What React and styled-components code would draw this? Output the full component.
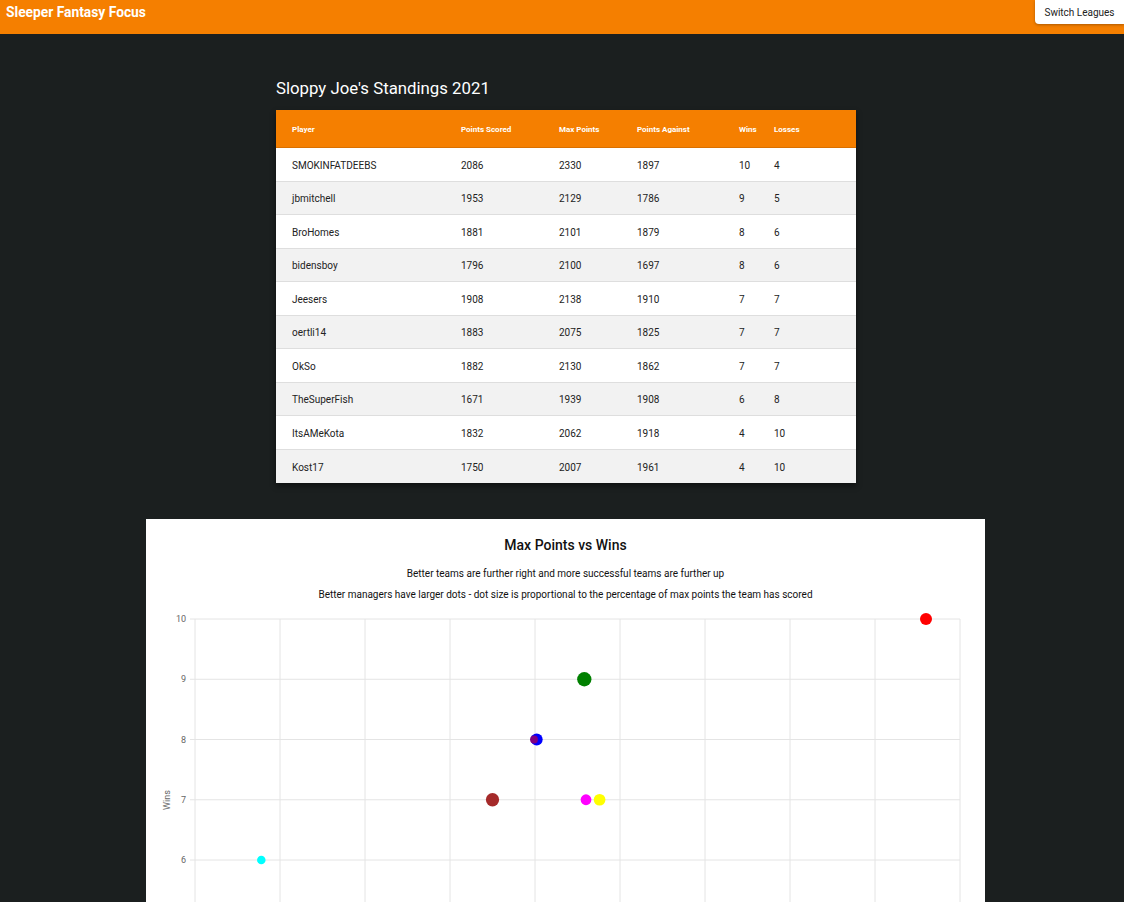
import React from 'react';
import styled, { createGlobalStyle } from 'styled-components';

const GlobalStyle = createGlobalStyle`
	body {
		margin: 0;
		background: #1b1f1f;
		font-family: Roboto, "Liberation Sans", sans-serif;
	}
`;

const Header = styled.header`
	height: 34px;
	background: #f57f00;
	display: flex;
	justify-content: space-between;
	align-items: flex-start;
`;

const Brand = styled.div`
	color: #fff;
	font-weight: 700;
	font-size: 13.8px;
	line-height: 24px;
	padding-left: 6px;
`;

const SwitchButton = styled.button`
	height: 24px;
	width: 89px;
	border: none;
	background: #fff;
	border-radius: 0 0 0 4px;
	box-shadow: 0 1px 3px rgba(0, 0, 0, 0.3);
	font-family: Roboto, "Liberation Sans", sans-serif;
	font-size: 10px;
	color: #222;
	padding: 0;
`;

const Main = styled.main`
	padding-left: 8px;
	display: flex;
	flex-direction: column;
	align-items: center;
`;

const Standings = styled.section`
	width: 580px;
	margin-top: 44px;
`;

const Title = styled.h2`
	margin: 0 0 12px;
	color: #fff;
	font-weight: 400;
	font-size: 16.8px;
	line-height: 20px;
`;

const Table = styled.div`
	background: #fff;
	box-shadow: 0 3px 6px rgba(0, 0, 0, 0.45);
`;

const Row = styled.div`
	display: grid;
	grid-template-columns: 169px 98px 78px 102px 35px 1fr;
	padding-left: 16px;
	padding-top: ${p => (p.head ? '1px' : '2px')};
	align-items: center;
	height: ${p => (p.head ? '38px' : '33.5px')};
	box-sizing: border-box;
	background: ${p => (p.head ? '#f57f00' : p.shade ? '#f2f2f2' : '#fff')};
	border-bottom: 1px solid ${p => (p.head ? '#d97000' : '#dedede')};
	color: ${p => (p.head ? '#fff' : '#222')};
	font-size: ${p => (p.head ? '8px' : '10px')};
	font-weight: ${p => (p.head ? 700 : 400)};
	&:last-child {
		border-bottom: none;
	}
`;

const ChartCard = styled.section`
	width: 839px;
	margin-top: 36px;
	margin-right: 1px;
	background: #fff;
	padding-top: 16px;
	text-align: center;
`;

const ChartTitle = styled.h3`
	margin: 0 0 12px;
	font-size: 14px;
	font-weight: 500;
	line-height: 20px;
	color: #111;
`;

const Sub = styled.p`
	margin: 7px 0 0;
	font-size: 10px;
	line-height: 14px;
	color: #111;
`;

const Plot = styled.svg`
	display: block;
	font-family: Roboto, "Liberation Sans", sans-serif;
`;

const teams = [
	{ name: 'SMOKINFATDEEBS', pf: 2086, max: 2330, pa: 1897, w: 10, l: 4, color: 'red' },
	{ name: 'jbmitchell', pf: 1953, max: 2129, pa: 1786, w: 9, l: 5, color: 'green' },
	{ name: 'BroHomes', pf: 1881, max: 2101, pa: 1879, w: 8, l: 6, color: 'blue' },
	{ name: 'bidensboy', pf: 1796, max: 2100, pa: 1697, w: 8, l: 6, color: 'purple' },
	{ name: 'Jeesers', pf: 1908, max: 2138, pa: 1910, w: 7, l: 7, color: 'yellow' },
	{ name: 'oertli14', pf: 1883, max: 2075, pa: 1825, w: 7, l: 7, color: 'brown' },
	{ name: 'OkSo', pf: 1882, max: 2130, pa: 1862, w: 7, l: 7, color: 'magenta' },
	{ name: 'TheSuperFish', pf: 1671, max: 1939, pa: 1908, w: 6, l: 8, color: 'cyan' },
	{ name: 'ItsAMeKota', pf: 1832, max: 2062, pa: 1918, w: 4, l: 10, color: 'orange' },
	{ name: 'Kost17', pf: 1750, max: 2007, pa: 1961, w: 4, l: 10, color: 'gray' },
];

const X0 = 49;
const X1 = 814;
const Y0 = 17;
const STEP = 60.25;
const px = v => X0 + ((v - 1900) * (X1 - X0)) / 450;
const py = w => Y0 + (10 - w) * STEP;

const Chart = () => {
	const xTicks = Array.from({ length: 10 }, (_, i) => 1900 + i * 50);
	const yTicks = [10, 9, 8, 7, 6, 5, 4];
	const bottom = py(4);
	return (
		<Plot width="839" height="440">
			{xTicks.map(t => (
				<line key={t} x1={px(t)} x2={px(t)} y1={Y0} y2={bottom + 5} stroke="#e4e4e4" />
			))}
			{yTicks.map(t => (
				<g key={t}>
					<line x1={X0 - 5} x2={X1} y1={py(t)} y2={py(t)} stroke="#e4e4e4" />
					<text x={X0 - 9} y={py(t) + 3} fontSize="9" fill="#666" textAnchor="end">{t}</text>
				</g>
			))}
			{xTicks.map(t => (
				<text key={t} x={px(t)} y={bottom + 16} fontSize="9" fill="#666" textAnchor="middle">{t}</text>
			))}
			<text x="24" y="198" fontSize="9" fill="#666" textAnchor="middle" transform="rotate(-90 24 198)">Wins</text>
			<text x={(X0 + X1) / 2} y={bottom + 32} fontSize="9" fill="#666" textAnchor="middle">Max Points</text>
			{teams.map(t => (
				<circle
					key={t.name}
					cx={px(t.max) - (t.color === 'purple' ? 1 : 0)}
					cy={py(t.w)}
					r={Math.max(3, (t.pf / t.max - 0.78) * 52)}
					fill={t.color}
				/>
			))}
		</Plot>
	);
};

const App = () => (
	<>
		<GlobalStyle />
		<Header>
			<Brand>Sleeper Fantasy Focus</Brand>
			<SwitchButton>Switch Leagues</SwitchButton>
		</Header>
		<Main>
			<Standings>
				<Title>Sloppy Joe's Standings 2021</Title>
				<Table>
					<Row head>
						<span>Player</span>
						<span>Points Scored</span>
						<span>Max Points</span>
						<span>Points Against</span>
						<span>Wins</span>
						<span>Losses</span>
					</Row>
					{teams.map((t, i) => (
						<Row key={t.name} shade={i % 2 === 1}>
							<span>{t.name}</span>
							<span>{t.pf}</span>
							<span>{t.max}</span>
							<span>{t.pa}</span>
							<span>{t.w}</span>
							<span>{t.l}</span>
						</Row>
					))}
				</Table>
			</Standings>
			<ChartCard>
				<ChartTitle>Max Points vs Wins</ChartTitle>
				<Sub>Better teams are further right and more successful teams are further up</Sub>
				<Sub>Better managers have larger dots - dot size is proportional to the percentage of max points the team has scored</Sub>
				<Chart />
			</ChartCard>
		</Main>
	</>
);

export default App;
